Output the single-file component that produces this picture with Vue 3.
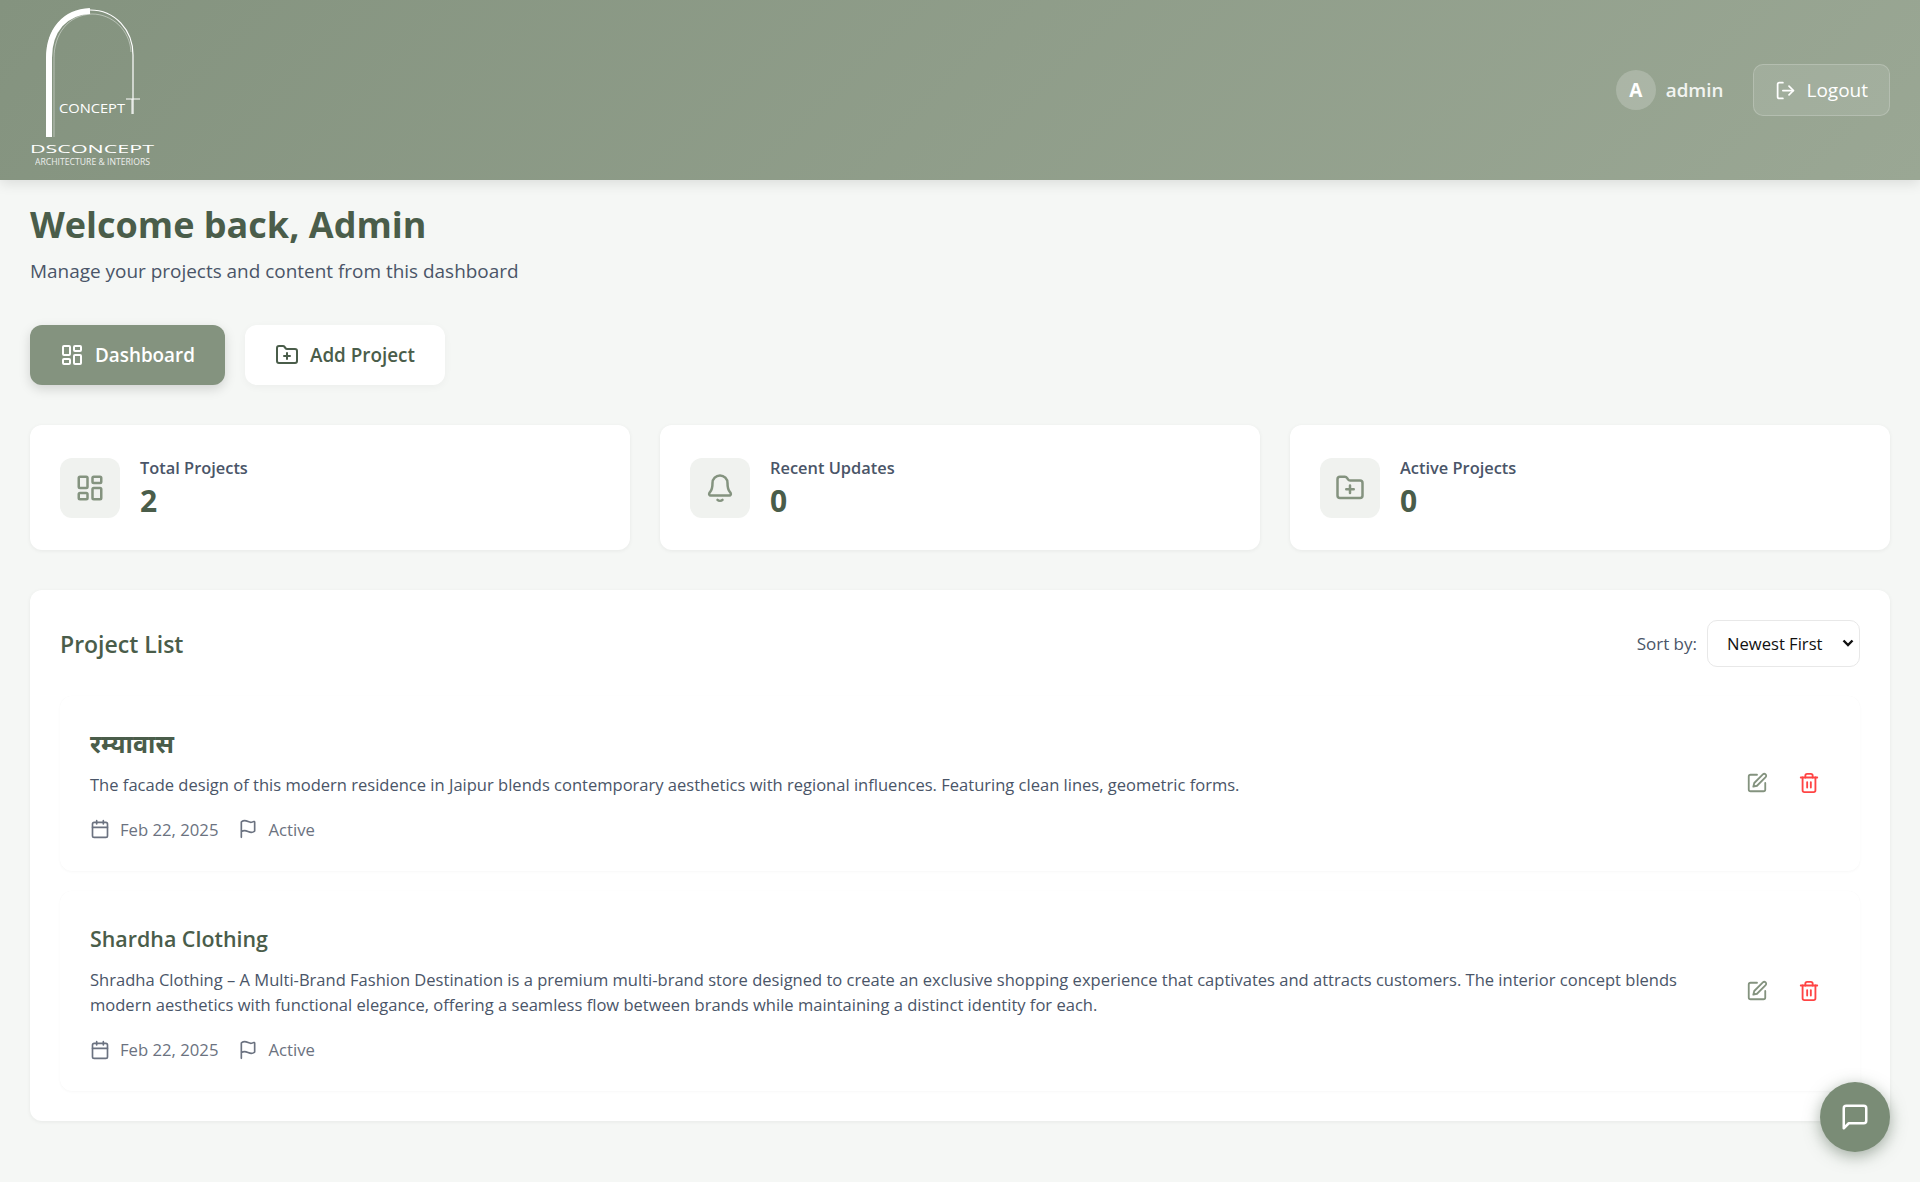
<template>
  <div class="page">
    <header class="topbar">
      <svg class="logo" width="170" height="180" viewBox="0 0 170 180">
        <path d="M47 137V58C47 30 63 10 90 10C115 10 133 30 133 55V114" fill="none" stroke="#fff" stroke-width="1.2" />
        <path d="M49 137V58C49 30 65 12 90 11" fill="none" stroke="#fff" stroke-width="6" />
        <path d="M54 137V58C54 34 68 15 92 14C112 14 130 30 131 52" fill="none" stroke="#fff" stroke-width="0.6" opacity=".7" />
        <path d="M132 99V114M126 99H140" fill="none" stroke="#fff" stroke-width="1" />
        <text x="59" y="113" class="logo-concept" textLength="66" lengthAdjust="spacingAndGlyphs">CONCEPT</text>
        <text x="30" y="153" class="logo-name" textLength="124" lengthAdjust="spacingAndGlyphs">DSCONCEPT</text>
        <text x="35" y="165" class="logo-sub" textLength="115" lengthAdjust="spacingAndGlyphs">ARCHITECTURE &amp; INTERIORS</text>
      </svg>
      <div class="user-area">
        <div class="user">
          <span class="avatar">A</span>
          <span class="username">admin</span>
        </div>
        <button class="logout">
          <svg width="21" height="21" viewBox="0 0 24 24" fill="none" stroke="currentColor" stroke-width="2" stroke-linecap="round" stroke-linejoin="round">
            <path d="M9 21H5a2 2 0 0 1-2-2V5a2 2 0 0 1 2-2h4" />
            <path d="M16 17l5-5-5-5" />
            <path d="M21 12H9" />
          </svg>
          Logout
        </button>
      </div>
    </header>

    <main class="content">
      <h1>Welcome back, Admin</h1>
      <p class="subtitle">Manage your projects and content from this dashboard</p>

      <nav class="tabs">
        <button class="tab active">
          <svg width="24" height="24" viewBox="0 0 24 24" fill="none" stroke="currentColor" stroke-width="2" stroke-linejoin="round">
            <rect x="3" y="3" width="7" height="9" rx="1" />
            <rect x="14" y="3" width="7" height="5" rx="1" />
            <rect x="14" y="12" width="7" height="9" rx="1" />
            <rect x="3" y="16" width="7" height="5" rx="1" />
          </svg>
          Dashboard
        </button>
        <button class="tab">
          <svg width="24" height="24" viewBox="0 0 24 24" fill="none" stroke="currentColor" stroke-width="2" stroke-linecap="round" stroke-linejoin="round">
            <path d="M12 10v6M9 13h6" />
            <path d="M20 20a2 2 0 0 0 2-2V8a2 2 0 0 0-2-2h-7.9a2 2 0 0 1-1.69-.9L9.6 3.9A2 2 0 0 0 7.93 3H4a2 2 0 0 0-2 2v13a2 2 0 0 0 2 2Z" />
          </svg>
          Add Project
        </button>
      </nav>

      <section class="stats">
        <div v-for="stat in stats" :key="stat.label" class="stat-card">
          <div class="stat-icon">
            <svg width="30" height="30" viewBox="0 0 24 24" fill="none" stroke="currentColor" stroke-width="2" stroke-linecap="round" stroke-linejoin="round">
              <path v-for="d in stat.paths" :key="d" :d="d" />
            </svg>
          </div>
          <div>
            <div class="stat-label">{{ stat.label }}</div>
            <div class="stat-value">{{ stat.value }}</div>
          </div>
        </div>
      </section>

      <section class="panel">
        <div class="panel-head">
          <h2>Project List</h2>
          <div class="sort">
            <label for="sort">Sort by:</label>
            <div class="select-wrap">
              <select id="sort">
                <option>Newest First</option>
                <option>Oldest First</option>
              </select>
              <svg class="chevron" width="12" height="8" viewBox="0 0 12 8" fill="none" stroke="#111" stroke-width="2.4">
                <path d="M1.5 1.5 6 6l4.5-4.5" />
              </svg>
            </div>
          </div>
        </div>

        <article v-for="project in projects" :key="project.title" class="project">
          <div class="project-body">
            <h3 :class="{ deva: project.deva }">{{ project.title }}</h3>
            <p>{{ project.text }}</p>
            <div class="meta">
              <svg width="20" height="20" viewBox="0 0 24 24" fill="none" stroke="currentColor" stroke-width="2" stroke-linecap="round" stroke-linejoin="round">
                <rect x="3" y="4" width="18" height="18" rx="2" />
                <path d="M16 2v4M8 2v4M3 10h18" />
              </svg>
              <span class="meta-date">{{ project.date }}</span>
              <svg width="20" height="20" viewBox="0 0 24 24" fill="none" stroke="currentColor" stroke-width="2" stroke-linecap="round" stroke-linejoin="round">
                <path d="M4 22V4a1 1 0 0 1 .4-.8A6 6 0 0 1 8 2c3 0 5 2 7.333 2q2 0 3.067-.8A1 1 0 0 1 20 4v10a1 1 0 0 1-.4.8A6 6 0 0 1 16 16c-3 0-5-2-8-2a8 8 0 0 0-4 1" />
              </svg>
              <span>{{ project.status }}</span>
            </div>
          </div>
          <div class="actions">
            <button class="icon-btn edit">
              <svg width="22" height="22" viewBox="0 0 24 24" fill="none" stroke="currentColor" stroke-width="2" stroke-linecap="round" stroke-linejoin="round">
                <path d="M12 3H5a2 2 0 0 0-2 2v14a2 2 0 0 0 2 2h14a2 2 0 0 0 2-2v-7" />
                <path d="M18.4 2.6a2.1 2.1 0 0 1 3 3L12 15l-4 1 1-4Z" />
              </svg>
            </button>
            <button class="icon-btn delete">
              <svg width="22" height="22" viewBox="0 0 24 24" fill="none" stroke="currentColor" stroke-width="2" stroke-linecap="round" stroke-linejoin="round">
                <path d="M3 6h18" />
                <path d="M19 6v14a2 2 0 0 1-2 2H7a2 2 0 0 1-2-2V6" />
                <path d="M8 6V4a2 2 0 0 1 2-2h4a2 2 0 0 1 2 2v2" />
                <path d="M10 11v6M14 11v6" />
              </svg>
            </button>
          </div>
        </article>
      </section>
    </main>

    <button class="chat">
      <svg width="30" height="30" viewBox="0 0 24 24" fill="none" stroke="currentColor" stroke-width="2" stroke-linecap="round" stroke-linejoin="round">
        <path d="M21 15a2 2 0 0 1-2 2H7l-4 4V5a2 2 0 0 1 2-2h14a2 2 0 0 1 2 2z" />
      </svg>
    </button>
  </div>
</template>

<script setup>
const stats = [
  {
    label: 'Total Projects',
    value: 2,
    paths: ['M4 3h5a1 1 0 0 1 1 1v7a1 1 0 0 1-1 1H4a1 1 0 0 1-1-1V4a1 1 0 0 1 1-1Z', 'M15 3h5a1 1 0 0 1 1 1v3a1 1 0 0 1-1 1h-5a1 1 0 0 1-1-1V4a1 1 0 0 1 1-1Z', 'M15 12h5a1 1 0 0 1 1 1v7a1 1 0 0 1-1 1h-5a1 1 0 0 1-1-1v-7a1 1 0 0 1 1-1Z', 'M4 16h5a1 1 0 0 1 1 1v3a1 1 0 0 1-1 1H4a1 1 0 0 1-1-1v-3a1 1 0 0 1 1-1Z']
  },
  {
    label: 'Recent Updates',
    value: 0,
    paths: ['M6 8a6 6 0 0 1 12 0c0 6 1.5 6.5 2.5 8 .5.9 0 2-1 2H4.5c-1 0-1.5-1.1-1-2 1-1.5 2.5-2 2.5-8', 'M10 21.5c1 1 3 1 4 0']
  },
  {
    label: 'Active Projects',
    value: 0,
    paths: ['M12 10v6M9 13h6', 'M20 20a2 2 0 0 0 2-2V8a2 2 0 0 0-2-2h-7.9a2 2 0 0 1-1.69-.9L9.6 3.9A2 2 0 0 0 7.93 3H4a2 2 0 0 0-2 2v13a2 2 0 0 0 2 2Z']
  }
]

const projects = [
  {
    title: 'रम्यावास',
    deva: true,
    text: 'The facade design of this modern residence in Jaipur blends contemporary aesthetics with regional influences. Featuring clean lines, geometric forms.',
    date: 'Feb 22, 2025',
    status: 'Active'
  },
  {
    title: 'Shardha Clothing',
    text: 'Shradha Clothing – A Multi-Brand Fashion Destination is a premium multi-brand store designed to create an exclusive shopping experience that captivates and attracts customers. The interior concept blends modern aesthetics with functional elegance, offering a seamless flow between brands while maintaining a distinct identity for each.',
    date: 'Feb 22, 2025',
    status: 'Active'
  }
]
</script>

<style>
html,
body {
  margin: 0;
  background: #f5f7f5;
}
</style>

<style scoped>
.page {
  min-height: 1182px;
  background: #f5f7f5;
  font-family: "Open Sans", "Noto Sans", sans-serif;
  color: #4a5d4a;
  box-sizing: border-box;
}

button {
  font-family: inherit;
  border: none;
  cursor: pointer;
}

.topbar {
  height: 180px;
  display: flex;
  justify-content: space-between;
  align-items: center;
  padding-right: 30px;
  background: linear-gradient(135deg, #84937f, #9aa794);
  box-shadow: 0 4px 12px rgba(0, 0, 0, 0.1);
}

.logo {
  display: block;
}

.logo text {
  fill: #fff;
  font-family: "Open Sans", sans-serif;
}

.logo-concept {
  font-size: 12.5px;
  font-weight: 400;
}

.logo-name {
  font-size: 11px;
  font-weight: 500;
}

.logo-sub {
  font-size: 9px;
  opacity: 0.85;
}

.user-area {
  display: flex;
  align-items: center;
  gap: 30px;
}

.user {
  display: flex;
  align-items: center;
  gap: 10px;
}

.avatar {
  width: 40px;
  height: 40px;
  border-radius: 50%;
  display: flex;
  align-items: center;
  justify-content: center;
  background: rgba(255, 255, 255, 0.2);
  color: #fff;
  font-weight: 700;
  font-size: 19px;
}

.username {
  color: #f2f4f1;
  font-weight: 600;
  font-size: 18.8px;
}

.logout {
  height: 52px;
  padding: 0 21px;
  display: flex;
  align-items: center;
  gap: 10px;
  border-radius: 10px;
  color: #fff;
  font-size: 19px;
  font-weight: 500;
  background: rgba(255, 255, 255, 0.1);
  border: 1px solid rgba(255, 255, 255, 0.2);
}

.content {
  padding: 21px 30px 0;
}

h1 {
  margin: 0;
  font-size: 36px;
  line-height: 48px;
  font-weight: 700;
  color: #4a5d4a;
}

.subtitle {
  margin: 9px 0 0;
  font-size: 18.95px;
  line-height: 26px;
  color: #4a5568;
}

.tabs {
  display: flex;
  gap: 20px;
  margin-top: 41px;
}

.tab {
  height: 60px;
  padding: 0 30px;
  display: flex;
  align-items: center;
  gap: 11px;
  border-radius: 12px;
  background: #fff;
  color: #4a5d4a;
  font-size: 18.85px;
  font-weight: 600;
  box-shadow: 0 2px 8px rgba(0, 0, 0, 0.04);
}

.tab.active {
  background: #84937f;
  color: #fff;
  box-shadow: 0 4px 12px rgba(0, 0, 0, 0.15);
}

.stats {
  display: grid;
  grid-template-columns: repeat(3, 1fr);
  gap: 30px;
  margin-top: 40px;
}

.stat-card {
  height: 125px;
  padding: 0 30px;
  box-sizing: border-box;
  display: flex;
  align-items: center;
  gap: 20px;
  background: #fff;
  border-radius: 12px;
  box-shadow: 0 1px 4px rgba(0, 0, 0, 0.06);
}

.stat-icon {
  width: 60px;
  height: 60px;
  display: flex;
  align-items: center;
  justify-content: center;
  border-radius: 12px;
  background: #f0f2ef;
  color: #84937f;
}

.stat-label {
  font-size: 16.4px;
  line-height: 24px;
  font-weight: 600;
  color: #4a5568;
}

.stat-value {
  margin-top: 3px;
  font-size: 30px;
  line-height: 36px;
  font-weight: 700;
  color: #4a5d4a;
}

.panel {
  margin-top: 40px;
  padding: 30px;
  background: #fff;
  border-radius: 12px;
  box-shadow: 0 1px 4px rgba(0, 0, 0, 0.06);
}

.panel-head {
  display: flex;
  justify-content: space-between;
  align-items: center;
  height: 47px;
  margin-bottom: 29px;
}

h2 {
  margin: 0;
  font-size: 23px;
  font-weight: 600;
  color: #4a5d4a;
}

.sort {
  display: flex;
  align-items: center;
  gap: 10px;
  font-size: 17px;
  color: #4a5568;
}

.select-wrap {
  position: relative;
  display: flex;
}

select {
  width: 153px;
  height: 47px;
  padding: 0 16px 0 19px;
  appearance: none;
  background: #fff;
  border: 1px solid #e8e8e8;
  border-radius: 10px;
  font-family: inherit;
  font-size: 16.6px;
  color: #111;
}

.chevron {
  position: absolute;
  right: 6px;
  top: 19px;
  pointer-events: none;
}

.project {
  display: flex;
  align-items: center;
  gap: 30px;
  padding: 30px;
  border-radius: 12px;
  box-shadow: 0 1px 3px rgba(0, 0, 0, 0.03), 0 0 1px rgba(0, 0, 0, 0.03);
  margin-bottom: 20px;
}

.project:last-child {
  margin-bottom: 0;
}

.project-body {
  flex: 1;
}

h3 {
  margin: 0;
  font-size: 21.4px;
  line-height: 35px;
  font-weight: 600;
  color: #4a5d4a;
}

h3.deva {
  font-size: 25px;
  font-weight: 700;
}

.project p {
  margin: 11px 0 0;
  font-size: 16.55px;
  line-height: 25.7px;
  color: #4a5568;
}

.meta {
  display: flex;
  align-items: center;
  gap: 10px;
  margin-top: 20px;
  font-size: 16.7px;
  color: #6b7280;
}

.meta-date {
  margin-right: 10px;
}

.actions {
  display: flex;
  gap: 10px;
}

.icon-btn {
  width: 42px;
  height: 42px;
  padding: 0;
  display: flex;
  align-items: center;
  justify-content: center;
  background: none;
}

.edit {
  color: #84937f;
}

.delete {
  color: #ff4444;
}

.chat {
  position: fixed;
  right: 30px;
  bottom: 30px;
  width: 70px;
  height: 70px;
  border-radius: 50%;
  display: flex;
  align-items: center;
  justify-content: center;
  background: #7a8c76;
  color: #fff;
  box-shadow: 0 4px 16px rgba(74, 93, 74, 0.5);
}
</style>
